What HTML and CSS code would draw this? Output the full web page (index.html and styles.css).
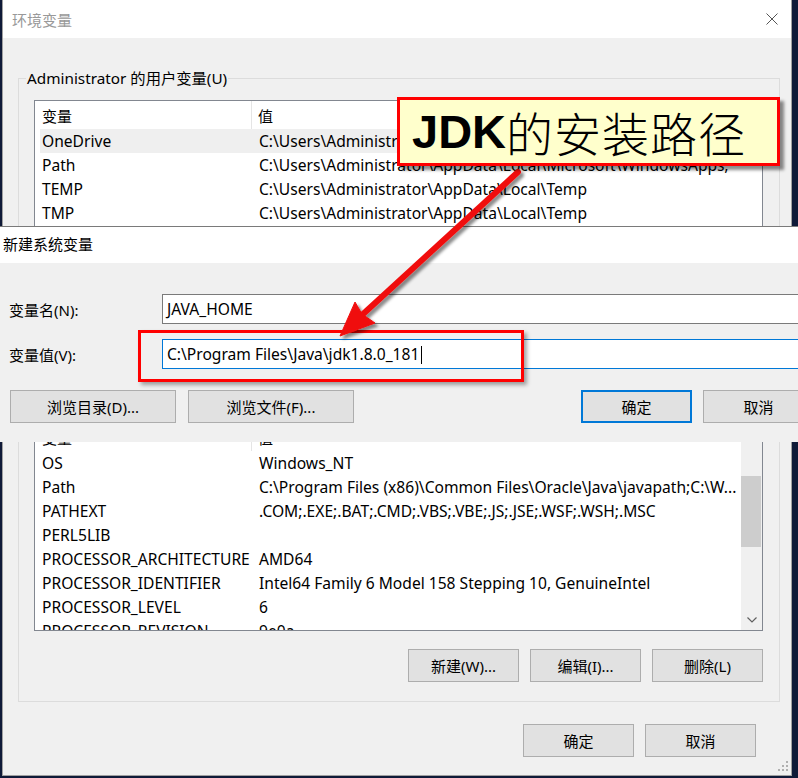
FILE: index.html
```html
<!DOCTYPE html>
<html>
<head>
	<title>环境变量</title>
	<meta charset="utf-8">
	<link rel="stylesheet" href="styles.css">
</head>
<body>
	<div class="window">
		<div class="titlebar">
			<span>环境变量</span>
			<svg class="close" width="12" height="12" viewBox="0 0 12 12"><path d="M0.5 0.5 L11.5 11.5 M11.5 0.5 L0.5 11.5" stroke="#555" stroke-width="1" fill="none"/></svg>
		</div>
		<div class="win-body">
			<fieldset class="group user">
				<legend>Administrator 的用户变量(U)</legend>
				<div class="list user-list">
					<div class="row head"><span class="c1">变量</span><span class="c2">值</span></div>
					<div class="row sel"><span class="c1">OneDrive</span><span>C:\Users\Administrator\OneDrive</span></div>
					<div class="row"><span class="c1">Path</span><span>C:\Users\Administrator\AppData\Local\Microsoft\WindowsApps;</span></div>
					<div class="row"><span class="c1">TEMP</span><span>C:\Users\Administrator\AppData\Local\Temp</span></div>
					<div class="row"><span class="c1">TMP</span><span>C:\Users\Administrator\AppData\Local\Temp</span></div>
				</div>
			</fieldset>

			<fieldset class="group system">
				<legend>系统变量(S)</legend>
				<div class="list sys-list">
					<div class="rows">
						<div class="row head"><span class="c1">变量</span><span class="c2">值</span></div>
						<div class="row"><span class="c1">OS</span><span>Windows_NT</span></div>
						<div class="row"><span class="c1">Path</span><span>C:\Program Files (x86)\Common Files\Oracle\Java\javapath;C:\W...</span></div>
						<div class="row"><span class="c1">PATHEXT</span><span>.COM;.EXE;.BAT;.CMD;.VBS;.VBE;.JS;.JSE;.WSF;.WSH;.MSC</span></div>
						<div class="row"><span class="c1">PERL5LIB</span><span></span></div>
						<div class="row"><span class="c1">PROCESSOR_ARCHITECTURE</span><span>AMD64</span></div>
						<div class="row"><span class="c1">PROCESSOR_IDENTIFIER</span><span>Intel64 Family 6 Model 158 Stepping 10, GenuineIntel</span></div>
						<div class="row"><span class="c1">PROCESSOR_LEVEL</span><span>6</span></div>
						<div class="row"><span class="c1">PROCESSOR_REVISION</span><span>9e0a</span></div>
					</div>
					<div class="sb">
						<div class="sb-btn"></div>
						<div class="sb-track"><div class="sb-thumb"></div></div>
						<div class="sb-btn">
							<svg width="10" height="6" viewBox="0 0 10 6"><path d="M0.5 0.5 L5 5 L9.5 0.5" stroke="#606060" stroke-width="1.2" fill="none"/></svg>
						</div>
					</div>
				</div>
				<div class="btns">
					<button class="btn">新建(W)...</button>
					<button class="btn">编辑(I)...</button>
					<button class="btn">删除(L)</button>
				</div>
			</fieldset>

			<div class="btns bottom">
				<button class="btn">确定</button>
				<button class="btn">取消</button>
			</div>
		</div>
		<svg class="grip" width="11" height="11" viewBox="0 0 11 11" fill="#b0b0b0">
			<rect x="8" y="0" width="2" height="2"/>
			<rect x="4" y="4" width="2" height="2"/><rect x="8" y="4" width="2" height="2"/>
			<rect x="0" y="8" width="2" height="2"/><rect x="4" y="8" width="2" height="2"/><rect x="8" y="8" width="2" height="2"/>
		</svg>
	</div>

	<!-- dialog on top -->
	<div class="dialog">
		<div class="dlg-title">新建系统变量</div>
		<div class="dlg-body">
			<label>变量名(N):</label>
			<div class="field">JAVA_HOME</div>
			<label>变量值(V):</label>
			<div class="field focus">C:\Program Files\Java\jdk1.8.0_181<span class="caret"></span></div>
			<div class="dlg-btns">
				<button class="btn wide">浏览目录(D)...</button>
				<button class="btn wide">浏览文件(F)...</button>
				<button class="btn ok">确定</button>
				<button class="btn cancel">取消</button>
			</div>
		</div>
	</div>

	<!-- annotations -->
	<div class="mark"></div>
	<svg class="arrow" width="798" height="778" viewBox="0 0 798 778">
		<defs>
			<filter id="sh" x="-20%" y="-20%" width="140%" height="140%">
				<feDropShadow dx="3" dy="3" stdDeviation="1.5" flood-color="#000" flood-opacity="0.45"/>
			</filter>
		</defs>
		<g filter="url(#sh)" fill="#f01010" stroke="#f01010">
			<line x1="518" y1="172" x2="362" y2="315" stroke-width="6" stroke-linecap="round"/>
			<polygon points="340,336 355,302 362,314 375,323" stroke-width="1" stroke-linejoin="round"/>
		</g>
	</svg>
	<div class="callout"><b>JDK</b><span>的安装路径</span></div>
</body>
</html>
```

FILE: styles.css
```css
* {
	box-sizing: border-box;
}

body {
	margin: 0;
	width: 798px;
	height: 778px;
	overflow: hidden;
	position: relative;
	background: #0f1a38;
	font-family: "Noto Sans", "Noto Sans CJK SC", sans-serif;
	font-size: 15px;
	color: #000;
}

button {
	font: inherit;
	color: #000;
}

.window {
	position: relative;
	margin-left: 2px;
	width: 790px;
	height: 776px;
	background: #f0f0f0;
	border: 1px solid #a0a0a0;
	border-top: 0;
	display: flex;
	flex-direction: column;
}

.titlebar {
	height: 38px;
	background: #fff;
	color: #999;
	display: flex;
	align-items: center;
	justify-content: space-between;
	padding: 0 13px 0 9px;
}

.win-body {
	flex: 1;
	padding: 0 11px 0 15px;
	display: flex;
	flex-direction: column;
}

.group {
	margin: 30px 0 0;
	padding: 12px 16px 0 15px;
	border: 1px solid #dcdcdc;
	min-width: 0;
}

.group legend {
	margin-left: -8px;
	padding: 0 1px;
	line-height: 20px;
	font-size: 15.3px;
}

.group.user {
	height: 302px;
}

.group.system {
	margin-top: 20px;
	padding-bottom: 19px;
}

.list {
	border: 1px solid #828790;
	background: #fff;
	overflow: hidden;
	font-size: 15.6px;
}

.user-list {
	height: 200px;
}

.sys-list {
	height: 209px;
	display: flex;
}

.rows {
	flex: 1;
	min-width: 0;
}

.row {
	display: flex;
	height: 24px;
	align-items: center;
	margin-left: 5px;
	padding-left: 2px;
	white-space: nowrap;
}

.row .c1 {
	width: 217px;
	flex: none;
}

.row.head {
	height: 28px;
	font-size: 15px;
}

.row.head .c1 {
	width: 210px;
	align-self: stretch;
	display: flex;
	align-items: center;
	border-right: 1px solid #e5e5e5;
}

.row.head .c2 {
	padding-left: 6px;
}

.row.sel {
	background: #efefef;
}

.sb {
	width: 21px;
	flex: none;
	background: #f0f0f0;
	display: flex;
	flex-direction: column;
}

.sb-btn {
	height: 21px;
	display: flex;
	align-items: center;
	justify-content: center;
}

.sb-track {
	flex: 1;
	padding: 32px 1px 0 0;
}

.sb-thumb {
	height: 71px;
	background: #cdcdcd;
}

.btns {
	display: flex;
	justify-content: flex-end;
	gap: 11px;
	margin-top: 18px;
}

.btn {
	width: 111px;
	height: 33px;
	padding: 0;
	background: #e1e1e1;
	border: 1px solid #adadad;
}

.btns.bottom {
	margin: 22px 24px 0 0;
}

.grip {
	position: absolute;
	right: 2px;
	bottom: 3px;
}

/* new variable dialog */
.dialog {
	position: absolute;
	left: 0;
	top: 226px;
	width: 840px;
	background: #f0f0f0;
	border-top: 1px solid #7a7a7a;
}

.dlg-title {
	height: 36px;
	line-height: 35px;
	padding-left: 3px;
	background: #fff;
}

.dlg-body {
	display: grid;
	grid-template-columns: 153px 1fr;
	row-gap: 15px;
	align-items: center;
	padding: 31px 20px 19px 9px;
}

.field {
	height: 30px;
	line-height: 28px;
	padding-left: 4px;
	background: #fff;
	border: 1px solid #7a7a7a;
	white-space: nowrap;
	font-size: 15.6px;
}

.field.focus {
	border-color: #0078d7;
}

.caret {
	display: inline-block;
	width: 1px;
	height: 18px;
	margin-left: 2px;
	vertical-align: -4px;
	background: #000;
}

.dlg-btns {
	grid-column: 1 / -1;
	display: flex;
	margin: 6px 0 0 1px;
}

.btn.wide {
	width: 166px;
	margin-right: 12px;
}

.btn.ok {
	margin-left: 215px;
	border: 2px solid #0078d7;
}

.btn.cancel {
	margin-left: 11px;
}

/* annotations */
.mark {
	position: absolute;
	left: 138px;
	top: 330px;
	width: 386px;
	height: 52px;
	border: 3px solid #f00;
	box-shadow: 3px 3px 4px rgba(0, 0, 0, 0.35);
}

.arrow {
	position: absolute;
	left: 0;
	top: 0;
}

.callout {
	position: absolute;
	left: 397px;
	top: 97px;
	width: 383px;
	height: 69px;
	padding-left: 12px;
	display: flex;
	align-items: center;
	background: #ffffcc;
	border: 3px solid #f00;
	box-shadow: 4px 4px 3px rgba(0, 0, 0, 0.45);
	font-size: 47px;
	line-height: 1;
}

.callout b {
	font-family: "Liberation Sans", sans-serif;
	font-weight: bold;
}

.callout span {
	font-family: "Noto Sans CJK SC", sans-serif;
	font-weight: 300;
	letter-spacing: 1px;
}
```
